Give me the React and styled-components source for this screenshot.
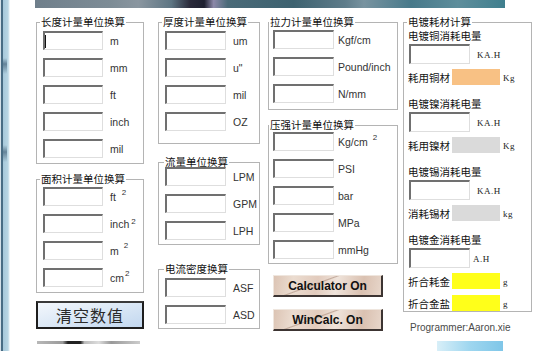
import styled, { createGlobalStyle } from "styled-components";

const CJK = `"Noto Sans CJK SC", "Noto Sans", sans-serif`;

const GlobalStyle = createGlobalStyle`
  html, body { margin: 0; padding: 0; background: #fff; }
  body { font-family: "Liberation Sans", Arial, sans-serif; }
`;

const lengthUnits = [{ u: "m" }, { u: "mm" }, { u: "ft" }, { u: "inch" }, { u: "mil" }];
const areaUnits = [
    { u: "ft", sup: { g: 6, r: 6 } },
    { u: "inch", sup: { g: 2, r: 4 } },
    { u: "m", sup: { g: 5, r: 7 } },
    { u: "cm", sup: { g: 1, r: 6 } },
];
const thickUnits = [{ u: "um" }, { u: "u\"" }, { u: "mil" }, { u: "OZ" }];
const flowUnits = [{ u: "LPM" }, { u: "GPM" }, { u: "LPH" }];
const densityUnits = [{ u: "ASF" }, { u: "ASD" }];
const tensionUnits = [{ u: "Kgf/cm" }, { u: "Pound/inch" }, { u: "N/mm" }];
const pressureUnits = [
    { u: "Kg/cm", sup: { g: 5, r: 6 } },
    { u: "PSI" }, { u: "bar" }, { u: "MPa" }, { u: "mmHg" },
];

const plating = [
    { title: "电镀铜消耗电量", unit: "KA.H", uGap: 7, rows: [{ l: "耗用铜材", c: "#f8c184", u: "Kg" }] },
    { title: "电镀镍消耗电量", unit: "KA.H", uGap: 7, rows: [{ l: "耗用镍材", c: "#dadada", u: "Kg" }] },
    { title: "电镀锡消耗电量", unit: "KA.H", uGap: 7, rows: [{ l: "消耗锡材", c: "#dadada", u: "kg" }] },
    { title: "电镀金消耗电量", unit: "A.H", uGap: 3, rows: [
        { l: "折合耗金", c: "#ffff1a", u: "g" },
        { l: "折合金盐", c: "#ffff1a", u: "g" },
    ] },
];

function UnitGroup({ title, units, w, gap, lx, mt, pt, pb, pl, caret }) {
    return (
        <Group $mt={mt}>
            <Legend $lx={lx}>{title}</Legend>
            <GroupBody $pt={pt} $pb={pb} $pl={pl}>
                {units.map((item, i) => (
                    <Row key={i}>
                        <Field $w={w} $caret={caret && i === 0} />
                        <Unit $gap={gap}>
                            {item.u}
                            {item.sup && <Sup $gap={item.sup.g} $raise={item.sup.r}>2</Sup>}
                        </Unit>
                    </Row>
                ))}
            </GroupBody>
        </Group>
    );
}

export default function App() {
    return (
        <Page>
            <GlobalStyle />
            <WinEdge />
            <Main>
                <Banner />
                <Columns>
                    <Column $w={108}>
                        <UnitGroup title="长度计量单位换算" units={lengthUnits} w={60} gap={7} pt={4} pb={5} pl={6} caret />
                        <UnitGroup title="面积计量单位换算" units={areaUnits} w={60} gap={7} mt={10} pt={3} pb={5} pl={6} />
                        <ClearButton>清空数值</ClearButton>
                    </Column>

                    <Column $w={102} $ml={14}>
                        <UnitGroup title="厚度计量单位换算" units={thickUnits} w={61} gap={7} pt={4} pb={12} pl={6} />
                        <UnitGroup title="流量单位换算" units={flowUnits} w={61} gap={7} lx={5} mt={13} pt={0} pb={4} pl={6} />
                        <UnitGroup title="电流密度换算" units={densityUnits} w={61} gap={7} lx={5} mt={19} pt={4} pb={4} pl={6} />
                    </Column>

                    <Column $w={130} $ml={8}>
                        <UnitGroup title="拉力计量单位换算" units={tensionUnits} w={61} gap={4} lx={0} pt={3} pb={6} pl={4} />
                        <UnitGroup title="压强计量单位换算" units={pressureUnits} w={61} gap={4} lx={0} mt={10} pt={2} pb={4} pl={4} />
                        <TexButton $mt={11}>Calculator On</TexButton>
                        <TexButton $mt={12}>WinCalc. On</TexButton>
                    </Column>

                    <Column $w={129} $ml={5}>
                        <Group>
                            <Legend>电镀耗材计算</Legend>
                            <PlateBody>
                                {plating.map((s, i) => (
                                    <Section key={s.title} $mt={i === 0 ? 0 : 12}>
                                        <PlateTitle>{s.title}</PlateTitle>
                                        <PlateInputRow>
                                            <Field $w={61} $h={20} />
                                            <SerifUnit $gap={s.uGap}>{s.unit}</SerifUnit>
                                        </PlateInputRow>
                                        {s.rows.map((r, j) => (
                                            <ResultRow key={r.l} $mt={j === 0 ? 5 : 6}>
                                                <ResultLabel>{r.l}</ResultLabel>
                                                <ResultBox $c={r.c} />
                                                <SerifUnit $gap={3}>{r.u}</SerifUnit>
                                            </ResultRow>
                                        ))}
                                    </Section>
                                ))}
                            </PlateBody>
                        </Group>
                        <Credit>Programmer:Aaron.xie</Credit>
                    </Column>
                </Columns>
                <Footer>
                    <FootLine />
                    <FootBar />
                </Footer>
            </Main>
        </Page>
    );
}

const Page = styled.div`
    display: flex;
    width: 551px;
    height: 351px;
    overflow: hidden;
    background: #fff;
`;

const WinEdge = styled.div`
    width: 10px;
    flex-shrink: 0;
    background:
        linear-gradient(to bottom, transparent 58px, rgba(40, 70, 95, 0.55) 64px, transparent 74px,
            transparent 145px, rgba(40, 70, 95, 0.55) 152px, transparent 162px) 3px 0 / 4px 100% no-repeat,
        linear-gradient(to right, #d4e0e8 0, #d4e0e8 1px, #486c84 1px, #486c84 3px,
            #a6c8da 3px, #b8d5e3 8px, #dbeaf1 9px, #fff 10px);
`;

const Main = styled.div`
    display: flex;
    flex-direction: column;
    margin-left: 25px;
`;

const Banner = styled.div`
    width: 470px;
    height: 8px;
    background: linear-gradient(to right, #6f7f8b 0%, #7d8c96 16%, #8a96a0 22%, #5d7583 29%,
        #2a2a3a 33%, #1e2030 36%, #8c88a8 38%, #4a6a78 41%, #3d6270 55%, #5f7d8b 66%,
        #7893a0 70%, #47798a 80%, #5e8e9c 90%, #3f7f8e 100%);
`;

const Columns = styled.div`
    display: flex;
    align-items: flex-start;
    margin-top: 9px;
    padding-left: 1px;
`;

const Column = styled.div`
    display: flex;
    flex-direction: column;
    width: ${({ $w }) => $w}px;
    margin-left: ${({ $ml }) => $ml || 0}px;
    flex-shrink: 0;
`;

const Group = styled.fieldset`
    margin: ${({ $mt }) => $mt || 0}px 0 0;
    padding: 0;
    border: 1px solid #b4b4b4;
    min-width: 0;
`;

const Legend = styled.legend`
    margin-left: ${({ $lx }) => ($lx ?? 3)}px;
    padding: 0 1px;
    font-family: ${CJK};
    font-size: 10.5px;
    line-height: 10px;
    color: #111;
    white-space: nowrap;
`;

const GroupBody = styled.div`
    display: flex;
    flex-direction: column;
    gap: 8px;
    padding: ${({ $pt }) => $pt}px 0 ${({ $pb }) => $pb}px ${({ $pl }) => $pl}px;
`;

const Row = styled.div`
    display: flex;
    align-items: flex-end;
`;

const Field = styled.input`
    box-sizing: border-box;
    flex-shrink: 0;
    width: ${({ $w }) => $w}px;
    height: ${({ $h }) => $h || 19}px;
    padding: 0;
    border: none;
    border-top: 2px solid #707070;
    border-left: 2px solid #707070;
    border-right: 1px solid #dedede;
    border-bottom: 1px solid #dedede;
    outline: none;
    background: ${({ $caret }) =>
        $caret ? "linear-gradient(#111, #111) no-repeat 0 2px / 1px 13px, #fff" : "#fff"};
`;

const Unit = styled.span`
    margin-left: ${({ $gap }) => $gap}px;
    padding-bottom: 3px;
    font-size: 10.5px;
    line-height: 12px;
    color: #333;
    white-space: nowrap;
`;

const Sup = styled.span`
    margin-left: ${({ $gap }) => $gap}px;
    font-size: 8px;
    line-height: 1;
    vertical-align: ${({ $raise }) => $raise}px;
`;

const ClearButton = styled.button`
    box-sizing: border-box;
    width: 108px;
    height: 28px;
    margin-top: 8px;
    padding: 0;
    border: 2px solid #1e1e1e;
    border-top-color: #3a3a3a;
    background: linear-gradient(165deg, #f3f7fc 0%, #dde9f6 45%, #c2d7ef 100%);
    font-family: ${CJK};
    font-size: 16px;
    letter-spacing: 1px;
    line-height: 22px;
    color: #2a2a2a;
`;

const TexButton = styled.button`
    box-sizing: border-box;
    width: 110px;
    height: 22px;
    margin: ${({ $mt }) => $mt}px 0 0 5px;
    padding: 0;
    border: none;
    border-top: 1px solid #efe6de;
    border-left: 1px solid #efe6de;
    border-right: 2px solid #3c3432;
    border-bottom: 2px solid #3c3432;
    background:
        linear-gradient(160deg, transparent 38%, rgba(120, 80, 60, 0.35) 40%, transparent 42%),
        linear-gradient(100deg, #dcc4b4 0%, #ebdcd0 18%, #e2cbbd 40%, #efe3da 58%, #dac1b1 82%, #e7d6ca 100%);
    font-family: "Liberation Sans", Arial, sans-serif;
    font-weight: bold;
    font-size: 12px;
    color: #111;
`;

const PlateBody = styled.div`
    display: flex;
    flex-direction: column;
    padding: 2px 0 0 4px;
`;

const Section = styled.div`
    display: flex;
    flex-direction: column;
    margin-top: ${({ $mt }) => $mt}px;
`;

const PlateTitle = styled.div`
    font-family: ${CJK};
    font-size: 10.5px;
    line-height: 13px;
    color: #111;
    white-space: nowrap;
`;

const PlateInputRow = styled.div`
    display: flex;
    align-items: center;
    margin-top: 2px;
    padding-left: 1px;
`;

const SerifUnit = styled.span`
    margin-left: ${({ $gap }) => $gap}px;
    padding-top: 2px;
    font-family: "Liberation Serif", "DejaVu Serif", serif;
    font-size: 9px;
    letter-spacing: 0.5px;
    color: #222;
`;

const ResultRow = styled.div`
    display: flex;
    align-items: center;
    height: 16px;
    margin-top: ${({ $mt }) => $mt}px;
`;

const ResultLabel = styled.span`
    width: 44px;
    font-family: ${CJK};
    font-size: 10.5px;
    line-height: 13px;
    color: #111;
    white-space: nowrap;
`;

const ResultBox = styled.div`
    width: 48px;
    height: 16px;
    background: ${({ $c }) => $c};
`;

const Credit = styled.div`
    margin-top: 10px;
    padding-left: 7px;
    font-size: 10px;
    line-height: 12px;
    color: #4a4a4a;
    white-space: nowrap;
`;

const Footer = styled.div`
    display: flex;
    align-items: flex-start;
    margin-top: 7px;
`;

const FootLine = styled.div`
    width: 103px;
    height: 3px;
    margin-left: 2px;
    background: linear-gradient(to right, #b8b8b8 0%, #9a9a9a 25%, #222 30%, #222 42%, #bbb 46%, #ddd 60%, #999 72%, #ccc 100%);
`;

const FootBar = styled.div`
    width: 66px;
    height: 10px;
    margin-left: 297px;
    background: linear-gradient(to right, #d8eff8, #9ed6ef 50%, #7fc6e8);
`;
